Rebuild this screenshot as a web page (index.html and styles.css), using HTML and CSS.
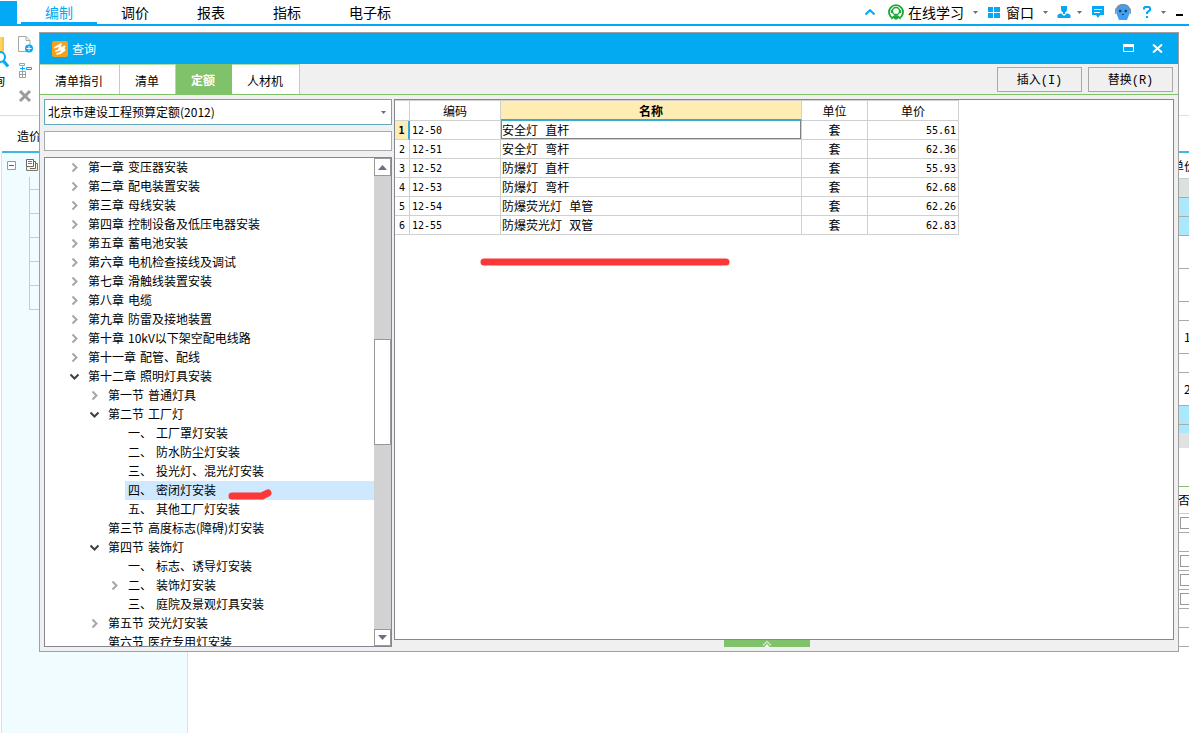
FILE: index.html
```html
<!DOCTYPE html>
<html lang="zh-CN">
<head>
<meta charset="utf-8">
<title>查询</title>
<link rel="stylesheet" href="styles.css">
</head>
<body>
<svg class="defs" aria-hidden="true">
  <symbol id="closed" viewBox="0 0 11 11"><path d="M3.5 1.5 7.5 5.5 3.5 9.500" fill="none" stroke="#a6a6a6" stroke-width="2"/></symbol>
  <symbol id="open" viewBox="0 0 11 11"><path d="M1.500 3.500 5.500 7.500 9.500 3.500" fill="none" stroke="#404040" stroke-width="2"/></symbol>
  <symbol id="caret" viewBox="0 0 5 3"><path d="M0 0H5L2.500 3Z" fill="#6b7080"/></symbol>
</svg>

<header class="menubar">
  <span class="app-block"></span>
  <nav class="menu">
    <a href="#" class="menu-item active">编制</a>
    <a href="#" class="menu-item">调价</a>
    <a href="#" class="menu-item">报表</a>
    <a href="#" class="menu-item">指标</a>
    <a href="#" class="menu-item">电子标</a>
  </nav>
  <div class="tools">
    <button class="tool" aria-label="收起"><svg width="10" height="6" viewBox="0 0 10 6"><path d="M0.500 5.500 5 1.200 9.500 5.500" fill="none" stroke="#03a9f4" stroke-width="2"/></svg></button>
    <button class="tool learn"><svg width="16" height="17" viewBox="0 0 16 17"><path d="M5 14.500A7 7 0 1 1 11 14.500" fill="none" stroke="#1fa83a" stroke-width="1.800"/><circle cx="8" cy="7" r="3.600" fill="none" stroke="#1fa83a" stroke-width="1.500"/><path d="M3.500 6V9M12.500 6V9" stroke="#1fa83a" stroke-width="1.500"/><path d="M3 16Q4 11 8 11T13 16L11 14 8 16 5 14Z" fill="#1fa83a"/></svg>在线学习</button>
    <svg class="caret after-text" width="5" height="3"><use href="#caret"/></svg>
    <button class="tool window"><svg width="12" height="11" viewBox="0 0 12 11"><path d="M0 0H5V5H0ZM6 0H12V5H6ZM0 6H5V11H0ZM6 6H12V11H6Z" fill="#03a9f4"/></svg>窗口</button>
    <svg class="caret after-text" width="5" height="3"><use href="#caret"/></svg>
    <button class="tool user" aria-label="用户"><svg width="14" height="12" viewBox="0 0 14 12"><path d="M4 0H10V4L9 6H5L4 4Z" fill="#03a9f4"/><path d="M6 6H8V8H6Z" fill="#03a9f4"/><path d="M3 7.500H4.500L7 10 9.500 7.500H11L13.500 9V12H.5V9Z" fill="#03a9f4"/></svg></button>
    <svg class="caret after-user" width="5" height="3"><use href="#caret"/></svg>
    <button class="tool chat" aria-label="消息"><svg width="12" height="12" viewBox="0 0 12 12"><path d="M0 0H12V9H8L6 12 4 9H0Z" fill="#03a9f4"/><path d="M2 3.500H10M2 6.500H8" stroke="#fff"/></svg></button>
    <button class="tool robot" aria-label="助手"><svg width="16" height="16" viewBox="0 0 16 16"><path d="M1 6Q2 0 8 0T15 6L14 11 12 16H4L2 11Z" fill="#3fa0f2"/><path d="M1.500 5Q3 .8 8 .8T14.500 5" fill="none" stroke="#7d8f9d" stroke-width="1.500"/><path d="M.8 4.500V10M15.200 4.500V10" stroke="#8b9aa6" stroke-width="1.600"/><circle cx="5.200" cy="7" r="1.300" fill="#1c3850"/><circle cx="10.800" cy="7" r="1.300" fill="#1c3850"/><path d="M7 10.500H9" stroke="#1c3850"/></svg></button>
    <button class="tool help" aria-label="帮助"><svg width="8" height="12" viewBox="0 0 8 12"><path d="M1 3.500V2L2 1H6L7 2V4L4 6.500V8M4 10V12" fill="none" stroke="#03a9f4" stroke-width="2"/></svg></button>
    <svg class="caret after-help" width="5" height="3"><use href="#caret"/></svg>
    <button class="tool minimize" aria-label="最小化"><svg width="7" height="8" viewBox="0 0 7 8"><path d="M0 7H7" stroke="#000" stroke-width="2"/></svg></button>
  </div>
</header>

<main class="workspace">
  <div class="ribbon">
    <div class="ribbon-large">
      <svg width="9" height="32" viewBox="0 0 9 32"><path d="M0 1H4V17H0Z" fill="#ffd45e"/><path d="M3 1V17" stroke="#f0b52c"/><circle cx="0" cy="21" r="5" fill="#fff" stroke="#03a9f4" stroke-width="2"/><path d="M3.500 25 8 30.500" stroke="#03a9f4" stroke-width="3"/></svg>
      <span class="cut-label">查询</span>
    </div>
    <div class="ribbon-small">
      <svg width="15" height="17" viewBox="0 0 15 17"><path d="M.5.5H8L12 4.500V15.500H.5ZM8 .5V4.500H12" fill="#fff" stroke="#a8a8a8"/><circle cx="11" cy="12.500" r="4" fill="#03a9f4"/><path d="M8.500 12.500H13.500M11 10V15" stroke="#fff"/></svg>
      <svg width="15" height="16" viewBox="0 0 15 16"><path d="M1.500.5H6.500V2.500H1.500ZM1.500 8.500H7.500V14.500H1.500ZM1.500 11.500H7.500M4.500 8.500V14.500" fill="none" stroke="#a0a0a0"/><path d="M2 5.500H7M4.500 3.500V7.500M8.500 4.500H13.500V6.500H8.500Z" fill="none" stroke="#03a9f4"/></svg>
      <svg width="14" height="14" viewBox="0 0 14 14"><path d="M2 2 12 12M12 2 2 12" stroke="#9c9c9c" stroke-width="3"/></svg>
    </div>
  </div>
  <div class="subtabs"><span>造价分析</span></div>
  <div class="project">
    <aside class="project-tree">
      <div class="project-root">
        <svg width="9" height="9" viewBox="0 0 9 9"><path d="M.5.5H8.500V8.500H.5Z" fill="#fff" stroke="#8b9da5"/><path d="M2 4.500H7" stroke="#147fa8"/></svg>
        <svg width="12" height="12" viewBox="0 0 12 12"><path d="M.5 7.500V11.500H11.500V4.500H9" fill="#fff6b8" stroke="#777"/><path d="M7.500 2.500H9.500V9.500H4" fill="#fff" stroke="#666"/><path d="M.5.5H7.500V7.500H.5Z" fill="#fff" stroke="#666"/><path d="M2 2.500H6M2 4.500H6" stroke="#1b95c9"/></svg>
      </div>
      <ul class="branches"><li></li><li></li><li></li><li></li><li></li><li></li></ul>
    </aside>
    <aside class="sheet-edge">
      <div class="edge-head">单价</div>
      <div class="edge-row muted"></div>
      <div class="edge-row blue"></div>
      <div class="edge-row blue"></div>
      <div class="edge-row tall"></div>
      <div class="edge-row tall"></div>
      <div class="edge-row"></div>
      <div class="edge-row tall">1</div>
      <div class="edge-row"></div>
      <div class="edge-row tall">2</div>
      <div class="edge-row blue"></div>
      <div class="edge-partial"></div>
      <div class="edge-scroll"></div>
      <div class="edge-gap"></div>
      <div class="edge-head second">是否计</div>
      <div class="edge-row check"><input type="checkbox" aria-label="第一行"></div>
      <div class="edge-row"></div>
      <div class="edge-row check"><input type="checkbox" aria-label="第三行"></div>
      <div class="edge-row check"><input type="checkbox" aria-label="第四行"></div>
      <div class="edge-row check"><input type="checkbox" aria-label="第五行"></div>
      <div class="edge-row"></div>
      <div class="edge-row"></div>
    </aside>
  </div>
</main>

<section class="dialog" role="dialog" aria-labelledby="dialog-title">
  <div class="titlebar">
    <svg width="16" height="16" viewBox="0 0 16 16"><rect width="16" height="16" rx="2" fill="#f7a11b"/><path d="M3 6.500Q6 5.500 9 3L7 8 12.500 5.500M4 10Q8 9 12 7L8.500 11.500M5 12.800Q9 12.500 12.500 9" fill="none" stroke="#fff" stroke-width="1.800" stroke-linecap="round" stroke-linejoin="round"/></svg>
    <h1 id="dialog-title">查询</h1>
    <button class="title-btn" aria-label="最大化"><svg width="11" height="9" viewBox="0 0 11 9"><path d="M.5.5H10.500V7.500H.5Z" fill="none" stroke="#fff"/><path d="M0 0H11V3H0Z" fill="#fff"/></svg></button>
    <button class="title-btn" aria-label="关闭"><svg width="11" height="9" viewBox="0 0 11 9"><path d="M1 .5 10 8.500M10 .5 1 8.500" stroke="#fff" stroke-width="2"/></svg></button>
  </div>
  <div class="tabbar">
    <button class="tab wide">清单指引</button>
    <button class="tab">清单</button>
    <button class="tab selected">定额</button>
    <button class="tab">人材机</button>
    <div class="actions">
      <button class="action">插入(I)</button>
      <button class="action">替换(R)</button>
    </div>
  </div>
  <div class="dialog-body">
    <div class="browser">
      <div class="combo">
        <select aria-label="定额库"><option>北京市建设工程预算定额(2012)</option></select>
        <svg width="5" height="3"><use href="#caret"/></svg>
      </div>
      <input class="search" type="text" aria-label="搜索">
      <div class="tree-box">
        <ul class="tree">
          <li><button class="twisty" aria-label="展开"><svg><use href="#closed"/></svg></button><span class="label"><span>第一章</span> <span>变压器安装</span></span></li>
          <li><button class="twisty" aria-label="展开"><svg><use href="#closed"/></svg></button><span class="label"><span>第二章</span> <span>配电装置安装</span></span></li>
          <li><button class="twisty" aria-label="展开"><svg><use href="#closed"/></svg></button><span class="label"><span>第三章</span> <span>母线安装</span></span></li>
          <li><button class="twisty" aria-label="展开"><svg><use href="#closed"/></svg></button><span class="label"><span>第四章</span> <span>控制设备及低压电器安装</span></span></li>
          <li><button class="twisty" aria-label="展开"><svg><use href="#closed"/></svg></button><span class="label"><span>第五章</span> <span>蓄电池安装</span></span></li>
          <li><button class="twisty" aria-label="展开"><svg><use href="#closed"/></svg></button><span class="label"><span>第六章</span> <span>电机检查接线及调试</span></span></li>
          <li><button class="twisty" aria-label="展开"><svg><use href="#closed"/></svg></button><span class="label"><span>第七章</span> <span>滑触线装置安装</span></span></li>
          <li><button class="twisty" aria-label="展开"><svg><use href="#closed"/></svg></button><span class="label"><span>第八章</span> <span>电缆</span></span></li>
          <li><button class="twisty" aria-label="展开"><svg><use href="#closed"/></svg></button><span class="label"><span>第九章</span> <span>防雷及接地装置</span></span></li>
          <li><button class="twisty" aria-label="展开"><svg><use href="#closed"/></svg></button><span class="label"><span>第十章</span> <span>10kV以下架空配电线路</span></span></li>
          <li><button class="twisty" aria-label="展开"><svg><use href="#closed"/></svg></button><span class="label"><span>第十一章</span> <span>配管、配线</span></span></li>
          <li><button class="twisty" aria-label="折叠"><svg><use href="#open"/></svg></button><span class="label"><span>第十二章</span> <span>照明灯具安装</span></span></li>
          <li class="level-2"><button class="twisty" aria-label="展开"><svg><use href="#closed"/></svg></button><span class="label"><span>第一节</span> <span>普通灯具</span></span></li>
          <li class="level-2"><button class="twisty" aria-label="折叠"><svg><use href="#open"/></svg></button><span class="label"><span>第二节</span> <span>工厂灯</span></span></li>
          <li class="level-3"><span class="twisty"></span><span class="label"><span>一、</span> <span>工厂罩灯安装</span></span></li>
          <li class="level-3"><span class="twisty"></span><span class="label"><span>二、</span> <span>防水防尘灯安装</span></span></li>
          <li class="level-3"><span class="twisty"></span><span class="label"><span>三、</span> <span>投光灯、混光灯安装</span></span></li>
          <li class="level-3 current"><span class="twisty"></span><span class="label"><span>四、</span> <span>密闭灯安装</span><svg class="short-mark" width="44" height="12" viewBox="0 0 44 12"><path d="M4 8H34L40 5" fill="none" stroke="#fb3737" stroke-width="7" stroke-linecap="round" stroke-linejoin="round"/></svg></span></li>
          <li class="level-3"><span class="twisty"></span><span class="label"><span>五、</span> <span>其他工厂灯安装</span></span></li>
          <li class="level-2"><span class="twisty"></span><span class="label"><span>第三节</span> <span>高度标志(障碍)灯安装</span></span></li>
          <li class="level-2"><button class="twisty" aria-label="折叠"><svg><use href="#open"/></svg></button><span class="label"><span>第四节</span> <span>装饰灯</span></span></li>
          <li class="level-3"><span class="twisty"></span><span class="label"><span>一、</span> <span>标志、诱导灯安装</span></span></li>
          <li class="level-3"><button class="twisty" aria-label="展开"><svg><use href="#closed"/></svg></button><span class="label"><span>二、</span> <span>装饰灯安装</span></span></li>
          <li class="level-3"><span class="twisty"></span><span class="label"><span>三、</span> <span>庭院及景观灯具安装</span></span></li>
          <li class="level-2"><button class="twisty" aria-label="展开"><svg><use href="#closed"/></svg></button><span class="label"><span>第五节</span> <span>荧光灯安装</span></span></li>
          <li class="level-2"><span class="twisty"></span><span class="label"><span>第六节</span> <span>医疗专用灯安装</span></span></li>
        </ul>
        <div class="scrollbar">
          <button class="scroll-btn" aria-label="向上"><svg width="9" height="5" viewBox="0 0 9 5"><path d="M0 5H9L4.500 0Z" fill="#6b7080"/></svg></button>
          <div class="track"><div class="thumb"></div></div>
          <button class="scroll-btn down" aria-label="向下"><svg width="9" height="5" viewBox="0 0 9 5"><path d="M0 0H9L4.500 5Z" fill="#6b7080"/></svg></button>
        </div>
      </div>
    </div>
    <div class="results">
      <div class="grid-box">
        <table class="quota">
          <colgroup><col class="c-no"><col class="c-code"><col class="c-name"><col class="c-unit"><col class="c-price"></colgroup>
          <thead><tr><th></th><th>编码</th><th class="sorted">名称</th><th>单位</th><th>单价</th></tr></thead>
          <tbody>
            <tr class="active-row"><th>1</th><td class="num">12-50</td><td class="name focus">安全灯 直杆</td><td class="unit">套</td><td class="num price">55.61</td></tr>
            <tr><th>2</th><td class="num">12-51</td><td class="name">安全灯 弯杆</td><td class="unit">套</td><td class="num price">62.36</td></tr>
            <tr><th>3</th><td class="num">12-52</td><td class="name">防爆灯 直杆</td><td class="unit">套</td><td class="num price">55.93</td></tr>
            <tr><th>4</th><td class="num">12-53</td><td class="name">防爆灯 弯杆</td><td class="unit">套</td><td class="num price">62.68</td></tr>
            <tr><th>5</th><td class="num">12-54</td><td class="name">防爆荧光灯 单管</td><td class="unit">套</td><td class="num price">62.26</td></tr>
            <tr><th>6</th><td class="num">12-55</td><td class="name">防爆荧光灯 双管</td><td class="unit">套</td><td class="num price">62.83</td></tr>
          </tbody>
        </table>
        <svg class="long-mark" width="250" height="8" viewBox="0 0 250 8"><path d="M4 4H246" stroke="#fb3737" stroke-width="7" stroke-linecap="round"/></svg>
      </div>
      <button class="expander" aria-label="展开详情"><svg width="10" height="7" viewBox="0 0 10 7"><path d="M1 5.500 5 1.500 9 5.500" fill="none" stroke="#c9e8bf" stroke-width="1.500"/><path d="M2.500 7 5 4 7.500 7Z" fill="#fff"/></svg></button>
    </div>
  </div>
</section>
</body>
</html>
```

FILE: styles.css
```css
* { box-sizing: border-box; }

body {
  margin: 0;
  height: 100vh;
  display: flex;
  flex-direction: column;
  position: relative;
  overflow: hidden;
  background: #fff;
  color: #000;
  font: 12px/18px "Noto Sans CJK SC", sans-serif;
}

button, input, select { font: inherit; color: inherit; margin: 0; padding: 0; }
button { border: 0; background: none; display: flex; align-items: center; justify-content: center; }
svg { display: block; flex: none; }
ul { list-style: none; margin: 0; padding: 0; }
.defs { position: absolute; width: 0; height: 0; }

/* menu bar */
.menubar { flex: none; display: flex; height: 26px; border-bottom: 2px solid #03a9f4; font-size: 14px; line-height: 20px; }
.app-block { width: 17px; margin-top: 1px; background: #03a9f4; }
.menu { display: flex; margin-left: 4px; }
.menu-item { padding: 2px 24px 0; color: #000; text-decoration: none; border-bottom: 2px solid transparent; white-space: nowrap; }
.menu-item.active { color: #03a9f4; border-bottom-color: #03a9f4; }
.tools { display: flex; align-items: center; margin-left: auto; padding-right: 6px; white-space: nowrap; }
.tool { height: 20px; }
.learn { margin-left: 13px; gap: 4px; }
.window { margin-left: 10px; gap: 6px; }
.after-text, .user { margin-left: 9px; }
.after-user { margin-left: 6px; }
.chat, .after-help { margin-left: 10px; }
.robot { margin-left: 11px; }
.help { margin-left: 12px; }
.minimize { margin-left: 10px; }

/* application behind the dialog */
.workspace { flex: 1; min-height: 0; display: flex; flex-direction: column; }
.ribbon { flex: none; height: 90px; display: flex; gap: 9px; padding-top: 10px; border-bottom: 1px solid #dcdcdc; }
.ribbon-large { width: 9px; display: flex; flex-direction: column; gap: 4px; }
.cut-label { width: 5px; display: flex; justify-content: flex-end; overflow: hidden; white-space: nowrap; }
.ribbon-small { display: flex; flex-direction: column; gap: 10px; }
.subtabs { flex: none; height: 37px; padding: 11px 0 0 15px; border-bottom: 2px solid #41b6e6; margin-left: 2px; }
.project { flex: 1; min-height: 0; display: flex; justify-content: space-between; margin-left: 1px; }
.project-tree { width: 187px; background: #f0fcff; border: solid #d9e2e5; border-width: 0 1px; }
.project-root { display: flex; align-items: center; gap: 10px; padding: 6px 0 0 5px; }
.branches { margin: 6px 0 0 27px; width: 20px; }
.branches li { height: 24px; border-left: 1px solid #c4cccf; border-bottom: 1px solid #c4cccf; }
.branches li:first-child { height: 13px; }
.sheet-edge { width: 10px; overflow: hidden; }
.edge-head { display: flex; justify-content: center; align-items: center; height: 26px; white-space: nowrap; border-bottom: 1px solid #ccc; }
.edge-row { height: 19px; border-bottom: 1px solid #aaa; display: flex; align-items: center; padding-left: 5px; }
.edge-row.tall { height: 33px; }
.muted { background: #dae2de; }
.blue { background: #aae8fb; }
.edge-row.check { padding-left: 1px; }
.check input { appearance: none; flex: none; width: 12px; height: 12px; border: 1px solid #999; background: #fff; }
.edge-partial { height: 8px; background: #aae8fb; }
.edge-scroll { height: 15px; background: #e1e1e1; }
.edge-gap { height: 39px; border-bottom: 1px solid #7fc26a; }
.edge-head.second { height: 27px; }

/* dialog */
.dialog {
  position: absolute;
  inset: 32px 10px 81px 39px;
  display: flex;
  flex-direction: column;
  border: 1px solid #a0a0a0;
  background: #f0f0f0;
}
.titlebar { flex: none; height: 31px; display: flex; align-items: center; padding: 0 11px 0 12px; background: #03a9f1; color: #fff; }
.titlebar h1 { flex: 1; margin: 0 0 0 4px; font-size: 12px; font-weight: 400; }
.title-btn { width: 19px; height: 19px; margin-left: 10px; }
.tabbar { flex: none; height: 31px; display: flex; border-bottom: 1px solid #7fc26a; }
.tab { padding: 2px 16px 0 15px; background: #fff; border: solid #aedda0; border-width: 1px 1px 0 0; white-space: nowrap; }
.tab.selected { background: #7fc26a; border-color: #7fc26a; color: #fff; font-weight: 700; padding-top: 0; }
.actions { display: flex; gap: 6px; margin-left: auto; padding: 3px 5px 2px 0; }
.action { width: 85px; padding-top: 2px; border: 1px solid #a8a8a8; font-family: "Liberation Mono", "Noto Sans CJK SC", monospace; }
.dialog-body { flex: 1; min-height: 0; display: flex; gap: 2px; padding: 4px; }

/* left pane */
.browser { width: 348px; flex: none; display: flex; flex-direction: column; gap: 6px; }
.combo { display: grid; align-items: center; height: 26px; }
.combo > * { grid-area: 1 / 1; }
.combo select { appearance: none; width: 100%; height: 26px; padding: 0 20px 0 3px; border: 1px solid #65a9c1; border-radius: 0; background: #fff; }
.combo svg { justify-self: end; margin-right: 6px; pointer-events: none; }
.search { height: 20px; border: 1px solid #aaa; background: #fff; }
.tree-box { flex: 1; min-height: 0; display: flex; border: 1px solid #828790; background: #fff; }
.tree { flex: 1; overflow: hidden; }
.tree li { display: flex; align-items: stretch; height: 19px; padding-left: 24px; white-space: nowrap; }
.tree .level-2 { padding-left: 44px; }
.tree .level-3 { padding-left: 64px; }
.twisty { width: 11px; flex: none; margin-right: 5px; }
.twisty svg { width: 11px; height: 11px; }
.label { flex: 1; display: flex; gap: 4px; padding-left: 3px; position: relative; }
.current .label { background: #cde8ff; }
.short-mark { position: absolute; left: 103px; top: 7px; }
.scrollbar { width: 17px; flex: none; display: flex; flex-direction: column; background: #d2d2d2; }
.scroll-btn { height: 18px; border: 1px solid #999; background: #fff; }
.scroll-btn.down { height: 17px; }
.track { flex: 1; display: flex; flex-direction: column; padding-top: 163px; }
.thumb { height: 106px; border: 1px solid #999; background: #fff; }

/* right pane */
.results { flex: 1; min-width: 0; display: flex; flex-direction: column; }
.grid-box { flex: 1; position: relative; border: 1px solid #828790; background: #fff; }
.quota { table-layout: fixed; width: 564px; border-collapse: separate; border-spacing: 0; border-top: 1px solid #d0d0d0; }
.c-no { width: 15px; }
.c-code { width: 91px; }
.c-name { width: 301px; }
.c-unit { width: 66px; }
.c-price { width: 91px; }
.quota th, .quota td { height: 19px; padding: 0 2px; border: solid #d0d0d0; border-width: 0 1px 1px 0; line-height: 18px; font-weight: 400; text-align: left; white-space: nowrap; }
.quota thead th { height: 20px; text-align: center; }
.quota thead .sorted { background: #ffecb3; border-bottom: 2px solid #3ba9d6; line-height: 17px; font-weight: 700; }
.quota tbody th, .quota .num { padding-top: 2px; font: 10px/16px "DejaVu Sans Mono", monospace; }
.quota tbody th { text-align: center; padding-left: 0; padding-right: 0; }
.quota .name { padding: 4px 1px 0; line-height: 14px; font-family: "Liberation Mono", "Noto Sans CJK SC", monospace; }
.quota .price { text-align: right; }
.quota .unit { text-align: center; }
.quota .active-row th { background: #ffecb3; border-right: 2px solid #3ba9d6; font-weight: 700; }
.quota .focus { box-shadow: inset -1px -1px #808080, inset 1px 0 #808080; }
.long-mark { position: absolute; left: 85px; top: 158px; }
.expander { width: 86px; height: 7px; margin-left: 330px; background: #7fc26a; }
```
